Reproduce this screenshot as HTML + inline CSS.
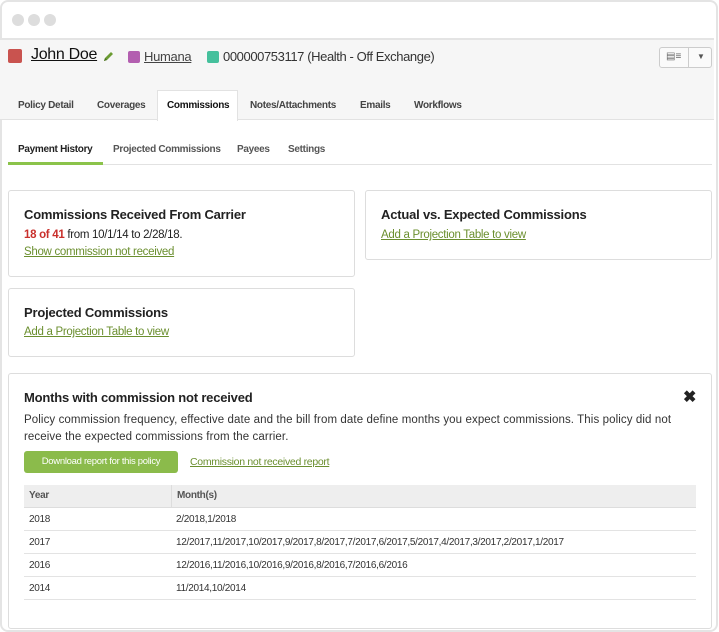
<!DOCTYPE html>
<html><head><meta charset="utf-8"><style>
*{box-sizing:border-box;margin:0;padding:0}
body{width:719px;height:632px;background:#fff;font-family:"Liberation Sans",sans-serif;color:#222;position:relative;overflow:hidden}
.abs{position:absolute}
.win{left:0;top:0;width:718px;height:632px;border:2px solid #e4e4e4;border-radius:8px;overflow:hidden}
.dot{width:12px;height:12px;border-radius:50%;background:#ddd;top:14px}
.hdr{left:0;top:38px;width:714px;height:82px;background:#f6f6f6;border-top:2px solid #e4e4e4;border-bottom:1px solid #e2e2e2}
.tab{font-size:10px;font-weight:bold;color:#444;top:100px;letter-spacing:-0.3px}
.sub{font-size:10px;font-weight:bold;color:#555;top:144px;letter-spacing:-0.3px}
.card{border:1px solid #ddd;border-radius:3px;background:#fff}
.h{font-size:13px;font-weight:bold;color:#222;letter-spacing:-0.2px}
.lnk{color:#6b8f2f;text-decoration:underline;font-size:11.5px;letter-spacing:-0.3px}
.t{font-size:10px;color:#333;letter-spacing:-0.3px}
.row{left:24px;width:672px;border-bottom:1px solid #e3e3e3;height:23px}
</style></head><body>
<div class="abs win"></div>
<div class="abs dot" style="left:12px"></div>
<div class="abs dot" style="left:28px"></div>
<div class="abs dot" style="left:44px"></div>
<div class="abs hdr"></div>
<div class="abs" style="left:8px;top:49px;width:14px;height:14px;background:#c9534f;border-radius:2px"></div>
<div class="abs" style="left:31px;top:46px;font-size:16px;text-decoration:underline;color:#111;letter-spacing:-0.3px">John Doe</div>
<svg class="abs" style="left:102px;top:50px" width="13" height="13" viewBox="0 0 13 13"><path d="M2 11 L3 8 L9 2 L11 4 L5 10 Z" fill="#6b9b32"/><path d="M2 11 L3 8 L5 10 Z" fill="#4a7020"/></svg>
<div class="abs" style="left:128px;top:51px;width:12px;height:12px;background:#b35fb0;border-radius:2px"></div>
<div class="abs" style="left:144px;top:49px;font-size:13px;text-decoration:underline;color:#444;letter-spacing:-0.3px">Humana</div>
<div class="abs" style="left:207px;top:51px;width:12px;height:12px;background:#45c09c;border-radius:2px"></div>
<div class="abs" style="left:223px;top:49px;font-size:13px;color:#333;letter-spacing:-0.4px">000000753117 (Health - Off Exchange)</div>
<div class="abs" style="left:659px;top:47px;width:53px;height:21px;border:1px solid #ccc;border-radius:3px;background:#fafafa"></div>
<div class="abs" style="left:688px;top:47px;width:1px;height:21px;background:#ccc"></div>
<div class="abs" style="left:666px;top:51px;font-size:10px;color:#666">▤≡</div>
<div class="abs" style="left:697px;top:52px;font-size:8px;color:#555">▼</div>
<div class="abs" style="left:157px;top:90px;width:81px;height:31px;background:#fff;border:1px solid #e2e2e2;border-bottom:none"></div>
<div class="abs tab" style="left:18px">Policy Detail</div>
<div class="abs tab" style="left:97px">Coverages</div>
<div class="abs tab" style="left:167px;color:#111">Commissions</div>
<div class="abs tab" style="left:250px">Notes/Attachments</div>
<div class="abs tab" style="left:360px">Emails</div>
<div class="abs tab" style="left:414px">Workflows</div>
<div class="abs sub" style="left:18px;color:#222">Payment History</div>
<div class="abs sub" style="left:113px">Projected Commissions</div>
<div class="abs sub" style="left:237px">Payees</div>
<div class="abs sub" style="left:288px">Settings</div>
<div class="abs" style="left:8px;top:164px;width:704px;height:1px;background:#e2e2e2"></div>
<div class="abs" style="left:8px;top:162px;width:95px;height:3px;background:#8bc34a"></div>

<div class="abs card" style="left:8px;top:190px;width:347px;height:87px"></div>
<div class="abs h" style="left:24px;top:207px">Commissions Received From Carrier</div>
<div class="abs" style="left:24px;top:229px;font-size:11.5px;letter-spacing:-0.3px"><b style="color:#c9302c">18 of 41</b> from 10/1/14 to 2/28/18.</div>
<div class="abs lnk" style="left:24px;top:246px">Show commission not received</div>

<div class="abs card" style="left:365px;top:190px;width:347px;height:70px"></div>
<div class="abs h" style="left:381px;top:207px">Actual vs. Expected Commissions</div>
<div class="abs lnk" style="left:381px;top:229px">Add a Projection Table to view</div>

<div class="abs card" style="left:8px;top:288px;width:347px;height:69px"></div>
<div class="abs h" style="left:24px;top:305px">Projected Commissions</div>
<div class="abs lnk" style="left:24px;top:326px">Add a Projection Table to view</div>

<div class="abs card" style="left:8px;top:373px;width:704px;height:256px"></div>
<div class="abs h" style="left:24px;top:390px">Months with commission not received</div>
<div class="abs" style="left:683px;top:387px;font-size:16px;font-weight:bold">✖</div>
<div class="abs" style="left:24px;top:412px;width:690px;font-size:11.5px;line-height:17px;color:#333;letter-spacing:0.1px;white-space:nowrap">Policy commission frequency, effective date and the bill from date define months you expect commissions. This policy did not<br>receive the expected commissions from the carrier.</div>
<div class="abs" style="left:24px;top:451px;width:154px;height:22px;background:#8bbb4b;border-radius:3px;color:#fff;font-size:9.5px;line-height:22px;text-align:center;letter-spacing:-0.3px">Download report for this policy</div>
<div class="abs lnk" style="left:190px;top:456px;font-size:10.5px">Commission not received report</div>
<div class="abs" style="left:24px;top:485px;width:672px;height:23px;background:#eee;border-bottom:1px solid #ddd"></div>
<div class="abs" style="left:171px;top:485px;width:1px;height:23px;background:#ddd"></div>
<div class="abs t" style="left:29px;top:490px;font-weight:bold;color:#555">Year</div>
<div class="abs t" style="left:177px;top:490px;font-weight:bold;color:#555">Month(s)</div>
<div class="abs row" style="top:508px"></div>
<div class="abs row" style="top:531px"></div>
<div class="abs row" style="top:554px"></div>
<div class="abs row" style="top:577px"></div>
<div class="abs t" style="left:29px;top:514px">2018</div><div class="abs t" style="left:176px;top:514px">2/2018,1/2018</div>
<div class="abs t" style="left:29px;top:537px">2017</div><div class="abs t" style="left:176px;top:537px">12/2017,11/2017,10/2017,9/2017,8/2017,7/2017,6/2017,5/2017,4/2017,3/2017,2/2017,1/2017</div>
<div class="abs t" style="left:29px;top:560px">2016</div><div class="abs t" style="left:176px;top:560px">12/2016,11/2016,10/2016,9/2016,8/2016,7/2016,6/2016</div>
<div class="abs t" style="left:29px;top:583px">2014</div><div class="abs t" style="left:176px;top:583px">11/2014,10/2014</div>
</body></html>
